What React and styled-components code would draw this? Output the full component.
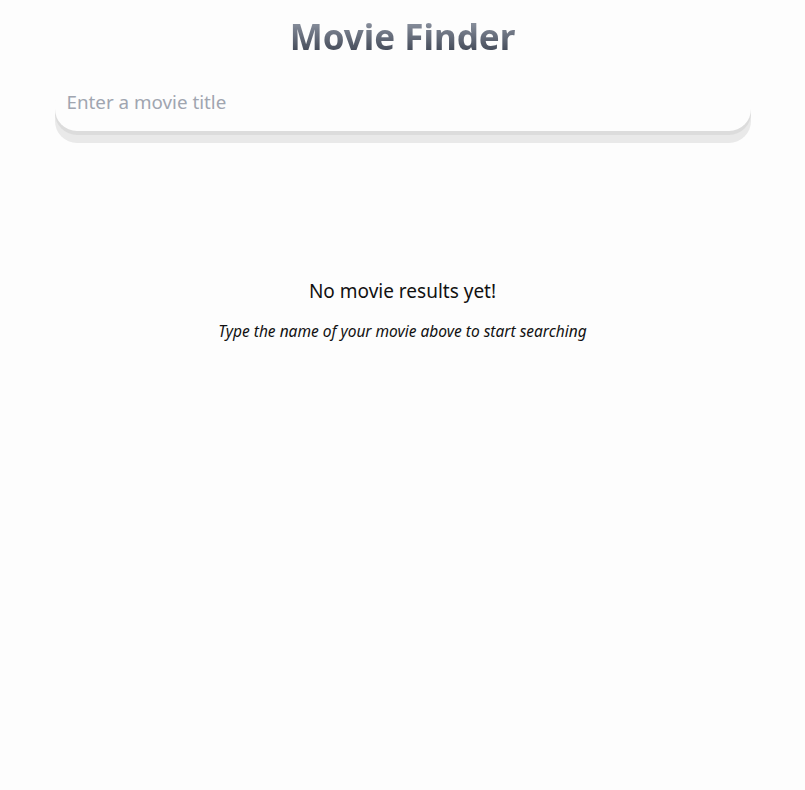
import React, { useState } from "react";
import styled, { createGlobalStyle } from "styled-components";

const GlobalStyle = createGlobalStyle`
  html, body {
    margin: 0;
    padding: 0;
    background: #fdfdfd;
    font-family: "Noto Sans", "Open Sans", "Liberation Sans", sans-serif;
  }
`;

const App = () => {
  const [query, setQuery] = useState("");

  return (
    <>
      <GlobalStyle />
      <Page>
        <Title>Movie Finder</Title>
        <SearchInput
          type="text"
          placeholder="Enter a movie title"
          value={query}
          onChange={(e) => setQuery(e.target.value)}
        />
        <Empty>
          <EmptyHeading>No movie results yet!</EmptyHeading>
          <EmptyHint>Type the name of your movie above to start searching</EmptyHint>
        </Empty>
      </Page>
    </>
  );
};

const Page = styled.div`
  width: 696px;
  margin: 0 auto;
  padding-top: 12px;
  display: flex;
  flex-direction: column;
  align-items: stretch;
`;

const Title = styled.h1`
  margin: 0 0 18px;
  text-align: center;
  font-size: 35px;
  line-height: 50px;
  font-weight: 700;
  background: linear-gradient(to bottom, #a3aab6 0%, #6b7280 45%, #2b3240 100%);
  -webkit-background-clip: text;
  background-clip: text;
  color: transparent;
`;

const SearchInput = styled.input`
  box-sizing: border-box;
  width: 100%;
  height: 51px;
  padding: 0 12px 8px;
  border: none;
  outline: none;
  border-radius: 22px;
  background: #fdfdfd;
  font-family: inherit;
  font-size: 18.8px;
  color: #333;
  box-shadow: 0 4px 0 #dcdcdc, 0 12px 0 #e9e9e9;

  &::placeholder {
    color: #a0a5b0;
  }
`;

const Empty = styled.div`
  margin-top: 147px;
  text-align: center;
  color: #111;
`;

const EmptyHeading = styled.p`
  margin: 0;
  font-size: 19px;
  line-height: 26px;
`;

const EmptyHint = styled.p`
  margin: 17px 0 0;
  font-size: 15.5px;
  font-style: italic;
  line-height: 20px;
`;

export default App;
